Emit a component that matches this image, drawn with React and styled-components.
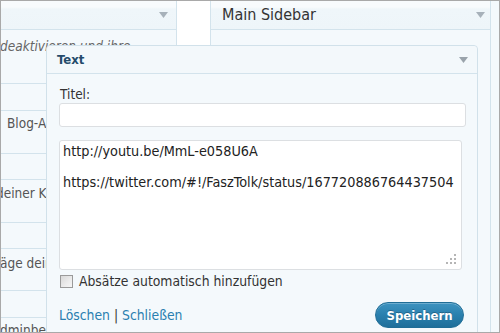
import React from 'react';
import styled, { createGlobalStyle } from 'styled-components';

const Global = createGlobalStyle`
  html, body { margin: 0; padding: 0; background: #fff; }
  body { font-family: "DejaVu Sans Condensed", "DejaVu Sans", sans-serif; }
`;

const Frame = styled.div`
  position: relative;
  width: 500px;
  height: 333px;
  box-sizing: border-box;
  border: 1px solid #a9a9a9;
  background: #f4f9fc;
  overflow: hidden;
  display: flex;
  align-items: stretch;
  color: #333;
`;

const LeftColumn = styled.div`
  width: 176px;
  flex: none;
  box-sizing: border-box;
  border-right: 1px solid #d3e3ec;
  display: flex;
  flex-direction: column;
`;

const Gap = styled.div`
  width: 33px;
  flex: none;
  background: #fff;
`;

const RightColumn = styled.div`
  width: 281px;
  flex: none;
  box-sizing: border-box;
  border-left: 1px solid #d3e3ec;
  border-right: 1px solid #d3e3ec;
  display: flex;
  flex-direction: column;
`;

const ColumnHeader = styled.div`
  height: 29px;
  flex: none;
  box-sizing: border-box;
  border-bottom: 1px solid #d3e3ec;
  background: linear-gradient(to bottom, #f8fbfd 0px, #f8fbfd 6px, #eff6fa 8px, #eef5f9 100%);
  display: flex;
  align-items: center;
  justify-content: space-between;
  padding: 0 ${(p) => p.$padRight}px 0 11px;
`;

const SidebarTitle = styled.span`
  font-size: 16px;
  color: #333;
  line-height: 18px;
`;

const Row = styled.div`
  height: ${(p) => p.$h}px;
  flex: none;
  box-sizing: border-box;
  border-bottom: 1px solid #d3e3ec;
  overflow: hidden;
  padding-top: ${(p) => p.$top || 0}px;
`;

const RowText = styled.div`
  font-size: 13.5px;
  line-height: 16px;
  color: ${(p) => (p.$italic ? '#666' : '#555')};
  white-space: nowrap;
  text-indent: ${(p) => p.$indent}px;
  font-style: ${(p) => (p.$italic ? 'italic' : 'normal')};
`;

const Arrow = ({ color = '#a7b1ba' }) => (
  <svg width="9" height="6" viewBox="0 0 9 6" style={{ display: 'block' }}>
    <polygon points="0,0 9,0 4.5,6" fill={color} />
  </svg>
);

const Popup = styled.div`
  position: absolute;
  left: 45px;
  top: 44px;
  width: 432px;
  height: 320px;
  box-sizing: border-box;
  border: 1px solid #d1e1ea;
  border-radius: 4px 4px 0 0;
  background: #f4f9fc;
  display: flex;
  flex-direction: column;
`;

const PopupHeader = styled.div`
  height: 28px;
  flex: none;
  box-sizing: border-box;
  border-bottom: 1px solid #d3e3ec;
  display: flex;
  align-items: center;
  justify-content: space-between;
  padding: 0 9px 0 10px;
  background: #f3f8fb;
  border-radius: 4px 4px 0 0;
`;

const PopupTitle = styled.span`
  font-size: 13px;
  font-weight: bold;
  color: #254b6b;
  line-height: 16px;
`;

const PopupBody = styled.div`
  padding: 12px 11px 0 12px;
  display: flex;
  flex-direction: column;
`;

const Label = styled.label`
  font-size: 13.5px;
  line-height: 17px;
  color: #333;
  padding-left: 1px;
`;

const TextInput = styled.input`
  display: block;
  width: 100%;
  height: 24px;
  box-sizing: border-box;
  border: 1px solid #dcdfe2;
  border-radius: 3px;
  background: #fff;
  margin: 0;
  outline: none;
`;

const AreaWrap = styled.div`
  position: relative;
  margin-top: 13px;
  width: 403px;
`;

const TextArea = styled.textarea`
  display: block;
  width: 403px;
  height: 130px;
  box-sizing: border-box;
  margin: 0;
  border: 1px solid #dcdfe2;
  border-radius: 3px;
  background: #fff;
  padding: 3px 3px;
  font-family: "DejaVu Sans Condensed", "DejaVu Sans", sans-serif;
  font-size: 14.3px;
  line-height: 15.5px;
  color: #222;
  white-space: pre;
  overflow: hidden;
  resize: none;
  outline: none;
`;

const Grip = styled.svg`
  position: absolute;
  right: 6px;
  bottom: 6px;
`;

const CheckRow = styled.div`
  display: flex;
  align-items: center;
  margin-top: 3px;
  height: 17px;
`;

const Box = styled.span`
  width: 13px;
  height: 13px;
  box-sizing: border-box;
  border: 1px solid #9a9a9a;
  background: linear-gradient(135deg, #d8d8d8 0%, #ececec 60%, #f6f6f6 100%);
  flex: none;
  margin-left: 1px;
`;

const CheckLabel = styled.span`
  margin-left: 6px;
  font-size: 13.8px;
  line-height: 17px;
  color: #333;
`;

const Footer = styled.div`
  display: flex;
  align-items: center;
  justify-content: space-between;
  margin-top: 12px;
  padding-right: 2px;
`;

const Links = styled.div`
  font-size: 13.8px;
  line-height: 17px;
  color: #333;
`;

const Link = styled.a`
  color: #2a7fb0;
  text-decoration: none;
`;

const SaveButton = styled.button`
  width: 89px;
  height: 26px;
  box-sizing: border-box;
  border: 1px solid #1f6d96;
  border-radius: 13px;
  background: linear-gradient(to bottom, #3d93c0 0%, #2a80ae 50%, #1f6f9a 100%);
  box-shadow: inset 0 1px 0 rgba(255, 255, 255, 0.25);
  color: #fff;
  font-family: "DejaVu Sans Condensed", "DejaVu Sans", sans-serif;
  font-size: 13px;
  font-weight: bold;
  text-shadow: 0 -1px 0 rgba(0, 0, 0, 0.25);
  padding: 0;
  cursor: pointer;
`;

const Spacer = styled.div`
  flex: 1;
`;

const leftRows = [
  { h: 27 },
  { h: 43, top: 4, text: 'Blog-Artikel.', indent: 6 },
  { h: 26 },
  { h: 43, top: 5, text: 'deiner Kategorien.', indent: -5 },
  { h: 26 },
  { h: 42, top: 6, text: 'räge deines Blogs.', indent: -6 },
  { h: 27 },
  { h: 43, top: 4, text: 'Adminbereich.', indent: -9 },
];

export default function App() {
  return (
    <>
      <Global />
      <Frame>
        <LeftColumn>
          <ColumnHeader $padRight={8}>
            <span />
            <Arrow />
          </ColumnHeader>
          <Row $h={54} $top={8}>
            <RowText $italic $indent={-1}>deaktivieren und ihre</RowText>
          </Row>
          {leftRows.map((r, i) => (
            <Row key={i} $h={r.h} $top={r.top}>
              {r.text && <RowText $indent={r.indent}>{r.text}</RowText>}
            </Row>
          ))}
        </LeftColumn>
        <Gap />
        <RightColumn>
          <ColumnHeader $padRight={5}>
            <SidebarTitle>Main Sidebar</SidebarTitle>
            <Arrow />
          </ColumnHeader>
          <Spacer />
        </RightColumn>

        <Popup>
          <PopupHeader>
            <PopupTitle>Text</PopupTitle>
            <Arrow color="#9aa3ab" />
          </PopupHeader>
          <PopupBody>
            <Label htmlFor="widget-title">Titel:</Label>
            <TextInput id="widget-title" type="text" defaultValue="" />
            <AreaWrap>
              <TextArea
                wrap="off"
                readOnly
                value={'http://youtu.be/MmL-e058U6A\n\nhttps://twitter.com/#!/FaszTolk/status/167720886764437504'}
              />
              <Grip width="10" height="10" viewBox="0 0 10 10">
                <rect x="8" y="0" width="2" height="2" fill="#b5b5b5" />
                <rect x="4" y="4" width="2" height="2" fill="#b5b5b5" />
                <rect x="8" y="4" width="2" height="2" fill="#b5b5b5" />
                <rect x="0" y="8" width="2" height="2" fill="#b5b5b5" />
                <rect x="4" y="8" width="2" height="2" fill="#b5b5b5" />
                <rect x="8" y="8" width="2" height="2" fill="#b5b5b5" />
              </Grip>
            </AreaWrap>
            <CheckRow>
              <Box />
              <CheckLabel>Absätze automatisch hinzufügen</CheckLabel>
            </CheckRow>
            <Footer>
              <Links>
                <Link href="#">Löschen</Link> | <Link href="#">Schließen</Link>
              </Links>
              <SaveButton type="button">Speichern</SaveButton>
            </Footer>
          </PopupBody>
        </Popup>
      </Frame>
    </>
  );
}
